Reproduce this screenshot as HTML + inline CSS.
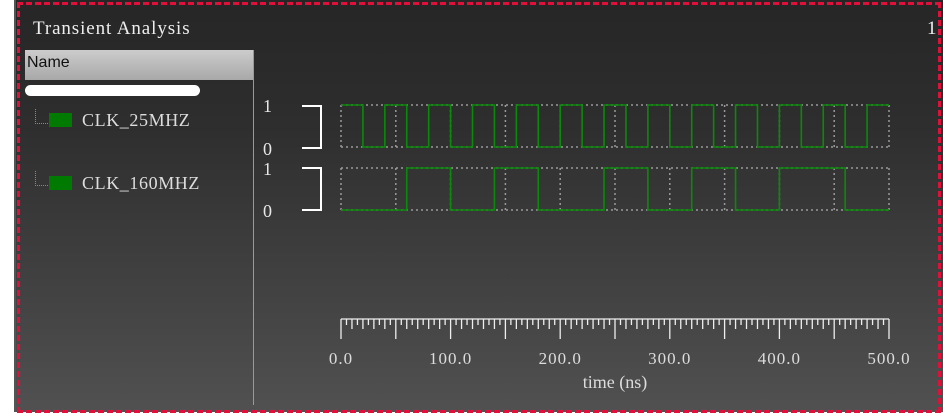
<!DOCTYPE html>
<html><head><meta charset="utf-8"><style>
html,body{margin:0;padding:0;}
body{width:943px;height:420px;overflow:hidden;background:linear-gradient(#262626,#2e2e2e 30%,#4a4a4a 85%,#525252);position:relative;font-family:"Liberation Serif",serif;}
#bl{position:absolute;left:0;top:0;width:14px;height:420px;background:#fff;}
#bl2{position:absolute;left:14px;top:0;width:2px;height:420px;background:#555;}
#bb{position:absolute;left:0;top:412px;width:943px;height:8px;background:#fff;}
#frame{position:absolute;left:17px;top:2px;width:918px;height:405px;border:3px dashed #e0103a;box-sizing:content-box;}
#title{position:absolute;left:33px;top:18px;color:#eee;font-size:19px;letter-spacing:0.9px;}
#one{position:absolute;left:927px;top:18px;color:#eee;font-size:19px;}
#hdr{position:absolute;left:25px;top:50px;width:228px;height:30px;background:linear-gradient(#ccc,#a8a8a8);color:#111;font-family:"Liberation Sans",sans-serif;font-size:16px;line-height:26px;padding-left:2px;box-sizing:border-box;}
#pill{position:absolute;left:25px;top:85px;width:175px;height:11px;border-radius:6px;background:#fff;}
#vline{position:absolute;left:253px;top:50px;width:1px;height:355px;background:#999;}
.lbl{position:absolute;color:#ddd;font-size:18px;letter-spacing:0.6px;}
.sw{position:absolute;width:23px;height:14px;background:#007a00;}
.tr{position:absolute;width:12px;height:14px;border-left:1px dotted #888;border-bottom:1px dotted #888;}
</style></head><body>
<div id="bl"></div><div id="bl2"></div><div id="bb"></div>
<div id="title">Transient Analysis</div>
<div id="one">1</div>
<div id="hdr">Name</div>
<div id="pill"></div>
<div id="vline"></div>
<div class="tr" style="left:35px;top:109px"></div>
<div class="sw" style="left:49px;top:113px"></div>
<div class="lbl" style="left:82px;top:110px">CLK_25MHZ</div>
<div class="tr" style="left:35px;top:171px"></div>
<div class="sw" style="left:49px;top:176px"></div>
<div class="lbl" style="left:82px;top:173px">CLK_160MHZ</div>
<svg id="sv" width="943" height="420" style="position:absolute;left:0;top:0" font-family="Liberation Serif, serif">
<g fill="#e8e8e8" font-size="18">
<text x="263" y="112">1</text><text x="263" y="155">0</text>
<text x="263" y="175">1</text><text x="263" y="217">0</text>
</g>
<g stroke="#fff" stroke-width="2" fill="none">
<path d="M302 106H321V148H302"/><path d="M302 168H321V210H302"/>
</g>
<g id="grid" stroke="#999" stroke-width="1.5" stroke-dasharray="2,3" fill="none"></g>
<g id="wave" stroke="#0a8a0a" stroke-width="1.6" fill="none"></g>
<g id="axis" stroke="#eee" stroke-width="1.3" fill="none"></g>
<g fill="#ddd" font-size="17" letter-spacing="1" text-anchor="middle" id="lab"></g>
<text x="615" y="388" fill="#ddd" font-size="18" text-anchor="middle">time (ns)</text>
</svg>
<script>
var x0=341,x1=889,s=(x1-x0)/500;function X(t){return x0+t*s;}
var g=document.getElementById('grid'),w=document.getElementById('wave'),a=document.getElementById('axis'),l=document.getElementById('lab');
var h='';
[[105,147],[168,210]].forEach(function(r){h+='<path d="M'+x0+' '+r[0]+'H'+x1+'M'+x0+' '+r[1]+'H'+x1+'"/>';
for(var t=0;t<=500;t+=50){h+='<path d="M'+X(t)+' '+r[0]+'V'+r[1]+'"/>';}});
g.innerHTML=h;
var d='M'+x0+' 105',hi=true;
for(var t=20;t<=500;t+=20){d+='H'+X(t);hi=!hi;if(t<500)d+='V'+(hi?105:147);}
var e=[60,100,140,180,240,280,320,360,400,460];
var d2='M'+x0+' 210',hh=false;
e.forEach(function(t){d2+='H'+X(t);hh=!hh;d2+='V'+(hh?168:210);});d2+='H'+x1;
w.innerHTML='<path d="'+d+'"/><path d="'+d2+'"/>';
var ah='<path d="M'+x0+' 319H'+x1+'"/>';
for(var t=0;t<=500;t+=5){var len=(t%50==0)?20:(t%10==0?10:6);ah+='<path d="M'+X(t)+' 319v'+len+'"/>';}
a.innerHTML=ah;
var lh='';for(var t=0;t<=500;t+=100){lh+='<text x="'+X(t)+'" y="364">'+t.toFixed(1)+'</text>';}
l.innerHTML=lh;
</script>
<div id="frame"></div>
</body></html>
